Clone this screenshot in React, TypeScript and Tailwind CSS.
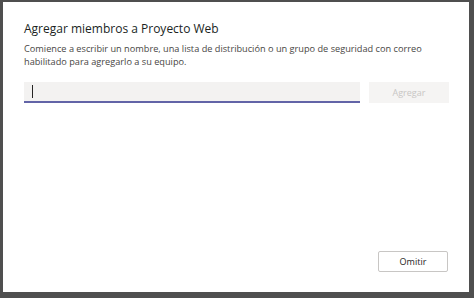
export default function App() {
  return (
    <div
      className="flex h-[298px] w-[474px] bg-[#4f4f4f] pt-[2px] pb-[6px] pl-[3px] pr-[5px]"
      style={{ fontFamily: '"Open Sans", "Noto Sans", sans-serif' }}
    >
      <div className="flex flex-1 flex-col bg-white pt-[19px] pb-[20px] pl-[21px] pr-[20px]">
        <h1 className="text-[12px] font-medium leading-[16px] text-[#201f1e]">
          Agregar miembros a Proyecto Web
        </h1>
        <p className="mt-[5px] w-[410px] text-[9.2px] leading-[13px] text-[#484644]">
          Comience a escribir un nombre, una lista de distribución o un grupo de seguridad con correo
          habilitado para agregarlo a su equipo.
        </p>

        <div className="mt-[14px] flex items-start gap-[9px]">
          <div className="flex h-[21px] w-[336px] items-center border-b-[2px] border-[#6264a7] bg-[#f3f2f1] pl-[8px]">
            <span className="h-[13px] w-[1px] bg-[#252423]" />
          </div>
          <button className="flex h-[21px] w-[80px] items-center justify-center bg-[#f5f4f3] text-[9px] text-[#c8c6c4]">
            Agregar
          </button>
        </div>

        <div className="flex-1" />

        <div className="flex justify-end pr-[1px]">
          <button className="flex h-[21px] w-[70px] items-center justify-center rounded-[2px] border border-[#c8c6c4] bg-white text-[9px] text-[#252423]">
            Omitir
          </button>
        </div>
      </div>
    </div>
  );
}
